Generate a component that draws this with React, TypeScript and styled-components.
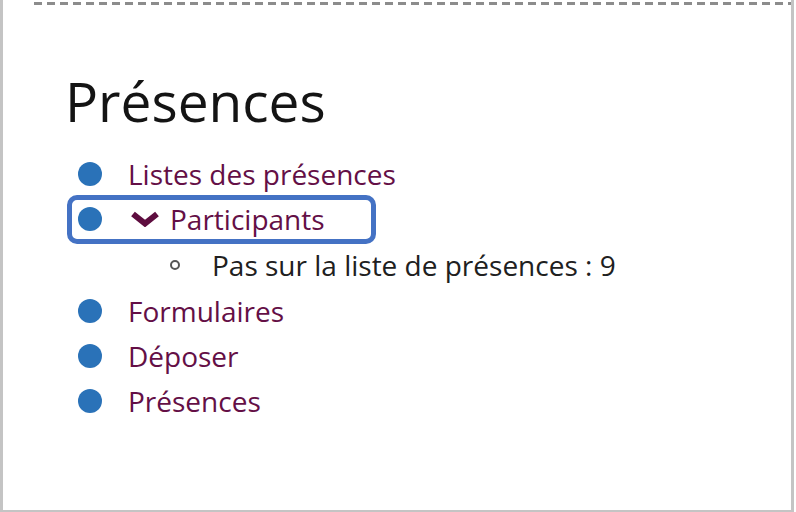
import styled, { createGlobalStyle } from 'styled-components';

const GlobalStyle = createGlobalStyle`
  html, body {
    margin: 0;
    padding: 0;
    background: #ffffff;
  }
  body {
    font-family: 'Open Sans', 'Noto Sans', 'Liberation Sans', sans-serif;
  }
`;

interface NavEntry {
  label: string;
  expanded?: boolean;
  highlighted?: boolean;
  children?: string[];
}

const entries: NavEntry[] = [
  { label: 'Listes des présences' },
  {
    label: 'Participants',
    expanded: true,
    highlighted: true,
    children: ['Pas sur la liste de présences : 9'],
  },
  { label: 'Formulaires' },
  { label: 'Déposer' },
  { label: 'Présences' },
];

export default function App() {
  return (
    <>
      <GlobalStyle />
      <Frame>
        <TopRule />
        <Content>
          <Title>Présences</Title>
          <NavList>
            {entries.map((entry) => (
              <NavItem key={entry.label}>
                <Row>
                  <Dot />
                  {entry.expanded && (
                    <Chevron viewBox="0 0 30 16" aria-hidden="true">
                      <polyline points="3,3 15,12.5 27,3" />
                    </Chevron>
                  )}
                  <Label>{entry.label}</Label>
                  {entry.highlighted && <Highlight />}
                </Row>
                {entry.children && (
                  <SubList>
                    {entry.children.map((child) => (
                      <SubItem key={child}>
                        <Ring />
                        <SubLabel>{child}</SubLabel>
                      </SubItem>
                    ))}
                  </SubList>
                )}
              </NavItem>
            ))}
          </NavList>
        </Content>
      </Frame>
    </>
  );
}

const Frame = styled.div`
  box-sizing: border-box;
  width: 794px;
  height: 512px;
  border-left: 3px solid #c4c4c4;
  border-right: 3px solid #c4c4c4;
  border-bottom: 2px solid #c4c4c4;
  background: #ffffff;
  overflow: hidden;
`;

const TopRule = styled.div`
  height: 3px;
  margin: 2px 0 0 31px;
  background: repeating-linear-gradient(to right, #8c8c8c 0 8px, transparent 8px 13px);
`;

const Content = styled.div`
  padding: 66px 0 0 62px;
`;

const Title = styled.h1`
  margin: 0 0 20px;
  font-size: 55px;
  line-height: 60px;
  font-weight: 400;
  color: #141414;
`;

const NavList = styled.ul`
  list-style: none;
  margin: 0;
  padding: 0 0 0 13px;
`;

const NavItem = styled.li`
  margin: 0;
`;

const Row = styled.div`
  position: relative;
  display: flex;
  align-items: center;
  height: 45px;
`;

const Dot = styled.span`
  flex: none;
  width: 24px;
  height: 24px;
  margin-right: 26px;
  border-radius: 50%;
  background: #2a72b8;
`;

const Chevron = styled.svg`
  flex: none;
  width: 30px;
  height: 16px;
  margin: 0 10px 0 2px;

  polyline {
    fill: none;
    stroke: #5e0d3f;
    stroke-width: 6;
  }
`;

const Label = styled.span`
  font-size: 28px;
  line-height: 1;
  color: #640f46;
`;

const Highlight = styled.span`
  position: absolute;
  left: -11px;
  top: -1px;
  width: 309px;
  height: 49px;
  box-sizing: border-box;
  border: 5px solid #4472c4;
  border-radius: 10px;
  pointer-events: none;
`;

const SubList = styled.ul`
  list-style: none;
  margin: 0;
  padding: 0 0 0 92px;
`;

const SubItem = styled.li`
  display: flex;
  align-items: center;
  height: 47px;
`;

const Ring = styled.span`
  flex: none;
  box-sizing: border-box;
  width: 10px;
  height: 10px;
  margin-right: 32px;
  border: 2.5px solid #555555;
  border-radius: 50%;
`;

const SubLabel = styled.span`
  font-size: 28px;
  line-height: 1;
  color: #202020;
`;
